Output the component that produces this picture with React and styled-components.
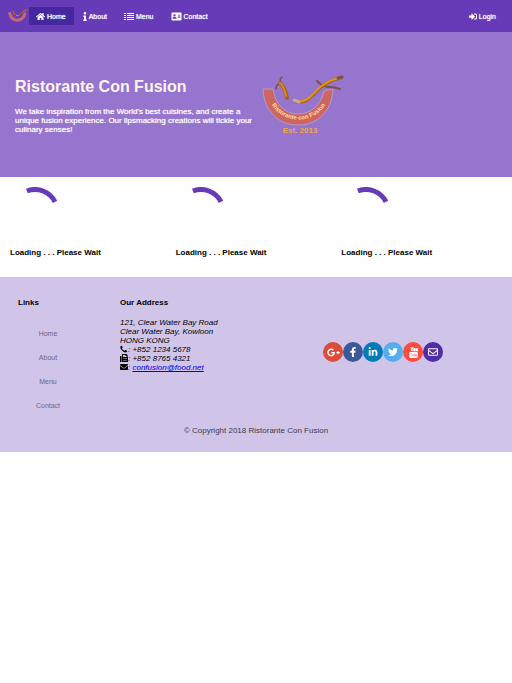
import React from "react";
import styled, { createGlobalStyle } from "styled-components";
import {
  FaHome,
  FaInfo,
  FaAddressCard,
  FaSignInAlt,
  FaFax,
  FaEnvelope,
  FaRegEnvelope,
  FaGooglePlusG,
  FaFacebookF,
  FaLinkedinIn,
  FaTwitter,
} from "react-icons/fa";

const GlobalStyle = createGlobalStyle`
  *, *::before, *::after { box-sizing: border-box; }
  body {
    margin: 0;
    background: #fff;
    color: #000;
    font: 8px/9px "Liberation Sans", Arial, sans-serif;
  }
  h1, h3, h4, p, ul { margin: 0; padding: 0; }
`;

const Toolbar = styled.nav`
  display: flex;
  align-items: center;
  height: 32px;
  padding: 0 6px 0 8px;
  background: #673ab7;
`;

const Spacer = styled.span`
  flex: 1;
`;

const NavLink = styled.a`
  display: flex;
  align-items: center;
  gap: 2px;
  height: 18px;
  margin-right: 2px;
  padding: 0 8px 0 7px;
  border-radius: 1px;
  background: ${(p) => (p.$active ? "#4527a0" : "transparent")};
  color: #fff;
  font-size: 7px;
  text-decoration: none;
  text-shadow: 0 0 1px #fff;

  svg {
    flex: none;
    width: ${(p) => p.$icon}px;
    height: 9px;
  }
`;

const Hero = styled.header`
  display: grid;
  grid-template-columns: minmax(0, 1fr) minmax(0, 1fr);
  gap: 12px;
  height: 145px;
  padding: 43px 15px 0;
  background: #9575cd;
  color: #fff3f0;
`;

const Title = styled.h1`
  margin: 3px 0 12px;
  font-size: 16px;
  line-height: 17px;
  white-space: nowrap;
`;

const Tagline = styled.p`
  color: #fff8fa;
  text-shadow: 0 0 1px #fff8fa;
  white-space: nowrap;
`;

const Cards = styled.main`
  display: grid;
  grid-template-columns: repeat(3, 1fr);
  gap: 5px;
  height: 100px;
  padding: 10px;
`;

const Loading = styled.section`
  h4 {
    margin-top: 7px;
    font-size: 8px;
  }

  svg {
    display: block;
  }
`;

const Footer = styled.footer`
  padding: 21px 18px 17px;
  background: #d1c4e9;
`;

const FooterColumns = styled.div`
  display: grid;
  grid-template-columns: 60px 1fr 2fr;
  column-gap: 42px;
`;

const Heading = styled.h3`
  font-size: 8px;
  line-height: 9px;
`;

const LinkList = styled.ul`
  margin-top: 15px;
  list-style: none;
  text-align: center;
`;

const FooterLink = styled.a`
  color: #6d6480;
  font-size: 7px;
  line-height: 24px;
  text-decoration: none;
`;

const Address = styled.address`
  margin-top: 11px;
  white-space: nowrap;

  svg {
    width: 8px;
    height: 8px;
    vertical-align: -1px;
  }

  a {
    color: #0000ee;
  }
`;

const Social = styled.div`
  display: flex;
  align-self: center;
  justify-content: center;
  padding-bottom: 12px;
`;

const SocialLink = styled.a`
  display: grid;
  place-items: center;
  width: 20px;
  height: 20px;
  border-radius: 50%;
  background: ${(p) => p.$color};
  color: #fff;

  svg {
    width: ${(p) => p.$icon || 10}px;
    height: ${(p) => p.$icon || 10}px;
  }
`;

const Copyright = styled.p`
  margin-top: 8px;
  text-align: center;
  color: #40394a;
`;

function Logo({ width, height, lettering }) {
  return (
    <svg width={width} height={height} viewBox="0 0 82 60" role="img" aria-label="Ristorante Con Fusion">
      <path
        d="M1 14 H11 C13 29 23 39 36 39 S59 30 62 16 L71 14 C70 36 56 50 36 50 S2 36 1 14 Z"
        fill="#cf6562"
        stroke="#b3a0bd"
        strokeWidth="1"
      />
      <g fill="none" strokeLinecap="round">
        <path d="M14 14 Q14 9 19 8 M19 8 Q17 4 20 2" stroke="#80503f" strokeWidth="1.5" />
        <path d="M18 8 Q23 12 25 23" stroke="#a5621d" strokeWidth="4" />
        <path d="M18 8 Q22 11 24 21" stroke="#d98b16" strokeWidth="2" />
        <path d="M55 6 Q61 12 67 12 T78 14" stroke="#80503f" strokeWidth="2" />
        <path d="M33 26 C47 31 52 16 61 11 Q68 5 79 3" stroke="#a5621d" strokeWidth="3" />
        <path d="M35 26 C47 29 52 15 61 10 Q68 5 76 3" stroke="#e39612" strokeWidth="2" />
        <path d="M32 25 L37 27" stroke="#c8a49a" strokeWidth="3" />
        <path d="M76 3 L80 2" stroke="#80503f" strokeWidth="3" />
      </g>
      {lettering && (
        <>
          <path id="bowl-curve" d="M7 25 A32 32 0 0 0 66 25" fill="none" />
          <text fill="#ffdf96" fontSize="6" fontWeight="700" textAnchor="middle">
            <textPath href="#bowl-curve" startOffset="50%">
              Ristorante con Fusion
            </textPath>
          </text>
          <text x="38" y="58" fill="#f2a64e" fontSize="8" fontWeight="700" textAnchor="middle">
            Est. 2013
          </text>
        </>
      )}
    </svg>
  );
}

function ListIcon() {
  return (
    <svg viewBox="0 0 10 9" fill="currentColor" aria-hidden="true">
      <path d="M0 1h2v1H0z M3 1h7v1H3z M0 3h2v1H0z M3 3h7v1H3z M0 5h2v1H0z M3 5h7v1H3z M0 7h2v1H0z M3 7h7v1H3z" />
    </svg>
  );
}

function PhoneIcon() {
  return (
    <svg viewBox="0 0 1536 1664" fill="currentColor" aria-hidden="true">
      <path d="M1408 1240q0 27-10 70.5t-21 68.5q-21 50-122 106-94 51-186 51-27 0-53-3.5t-57.5-12.5-47-14.5-55.5-20.5-49-18q-98-35-175-83-127-79-264-216t-216-264q-48-77-83-175-3-9-18-49t-20.5-55.5-14.5-47-12.5-57.5-3.5-53q0-92 51-186 56-101 106-122 25-11 68.5-21t70.5-10q14 0 21 3 18 6 53 76 11 19 30 54t35 63.5 31 53.5q3 4 17.5 25t21.5 35.5 7 28.5q0 20-28.5 50t-62 55-62 53-28.5 46q0 9 5 22.5t8.5 20.5 14 24 11.5 19q76 137 174 235t235 174q2 1 19 11.5t24 14 20.5 8.5 22.5 5q18 0 46-28.5t53-62 55-62 50-28.5q14 0 28.5 7t35.5 21.5 25 17.5q25 15 53.5 31t63.5 35 54 30q70 35 76 53 3 7 3 21z" />
    </svg>
  );
}

function YouTubeIcon() {
  return (
    <svg viewBox="0 0 24 28" fill="none" stroke="currentColor" strokeWidth="3" aria-hidden="true">
      <path d="M5 0 L8 7 L11 0 M8 6 V11" />
      <rect x="13" y="4" width="3" height="6" rx="1" />
      <path d="M19 3 V9 Q19 10 21 9 M22 3 V11" />
      <rect x="1" y="13" width="22" height="15" rx="3" fill="currentColor" stroke="none" />
      <path d="M4 16 H9 M6.5 16 V24 M10 18 V23 H12 V18 M15 15 V24 M15 19 H17 V23 H15 M21 23 H19 V19 H21" stroke="#ff5044" strokeWidth="1" />
    </svg>
  );
}

const NAV = [
  { label: "Home", Icon: FaHome, size: 9, active: true },
  { label: "About", Icon: FaInfo, size: 4 },
  { label: "Menu", Icon: ListIcon, size: 10 },
  { label: "Contact", Icon: FaAddressCard, size: 11 },
];

const SOCIAL = [
  { label: "Google+", color: "#dd4b39", Icon: FaGooglePlusG, size: 13 },
  { label: "Facebook", color: "#3b5998", Icon: FaFacebookF },
  { label: "LinkedIn", color: "#007bb6", Icon: FaLinkedinIn },
  { label: "Twitter", color: "#55acee", Icon: FaTwitter },
  { label: "YouTube", color: "#ff4b3e", Icon: YouTubeIcon, size: 11 },
  { label: "Mail", color: "#512da8", Icon: FaRegEnvelope },
];

export default function App() {
  return (
    <>
      <GlobalStyle />
      <Toolbar>
        <Logo width={21} height={15} />
        {NAV.map(({ label, Icon, size, active }) => (
          <NavLink key={label} href={`#${label.toLowerCase()}`} $active={active} $icon={size}>
            <Icon /> {label}
          </NavLink>
        ))}
        <Spacer />
        <NavLink href="#login" $icon={8}>
          <FaSignInAlt /> Login
        </NavLink>
      </Toolbar>
      <Hero>
        <div>
          <Title>Ristorante Con Fusion</Title>
          <Tagline>
            We take inspiration from the World's best cuisines, and create a
            <br />
            unique fusion experience. Our lipsmacking creations will tickle your
            <br />
            culinary senses!
          </Tagline>
        </div>
        <Logo width={82} height={60} lettering />
      </Hero>
      <Cards>
        {["dish", "promotion", "leader"].map((name) => (
          <Loading key={name}>
            <svg width="50" height="54" viewBox="0 0 50 54" aria-hidden="true">
              <path d="M16.9 4 A22.5 22.5 0 0 1 45 14.8" fill="none" stroke="#673ab7" strokeWidth="5" />
            </svg>
            <h4>Loading . . . Please Wait</h4>
          </Loading>
        ))}
      </Cards>
      <Footer>
        <FooterColumns>
          <div>
            <Heading>Links</Heading>
            <LinkList>
              {NAV.map(({ label }) => (
                <li key={label}>
                  <FooterLink href={`#${label.toLowerCase()}`}>{label}</FooterLink>
                </li>
              ))}
            </LinkList>
          </div>
          <div>
            <Heading>Our Address</Heading>
            <Address>
              121, Clear Water Bay Road
              <br />
              Clear Water Bay, Kowloon
              <br />
              HONG KONG
              <br />
              <PhoneIcon />: +852 1234 5678
              <br />
              <FaFax />: +852 8765 4321
              <br />
              <FaEnvelope />: <a href="mailto:confusion@food.net">confusion@food.net</a>
            </Address>
          </div>
          <Social>
            {SOCIAL.map(({ label, color, Icon, size }) => (
              <SocialLink key={label} href={`#${label}`} aria-label={label} $color={color} $icon={size}>
                <Icon />
              </SocialLink>
            ))}
          </Social>
        </FooterColumns>
        <Copyright>© Copyright 2018 Ristorante Con Fusion</Copyright>
      </Footer>
    </>
  );
}
